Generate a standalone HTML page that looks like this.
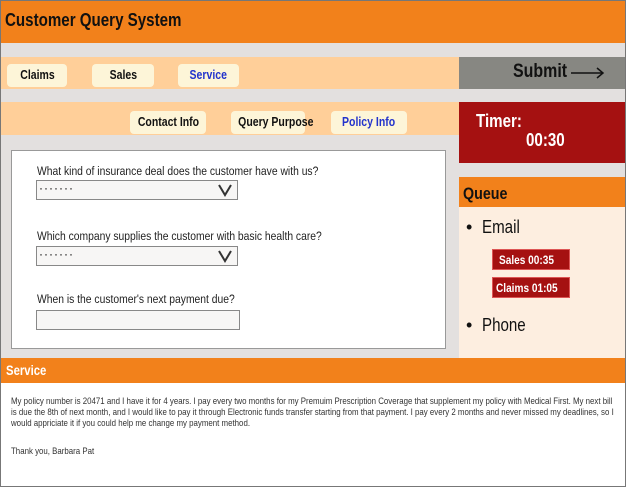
<!DOCTYPE html>
<html><head><style>
*{margin:0;padding:0;box-sizing:border-box}
body{width:626px;height:487px;position:relative;background:#e3e0df;font-family:"Liberation Sans",sans-serif;overflow:hidden}
.a{position:absolute;white-space:nowrap}
.c{display:inline-block;transform:scaleX(.84);transform-origin:left center;white-space:nowrap}
.tab{position:absolute;background:#fdf5d8;border-radius:4px;font-weight:bold;font-size:12.5px;text-align:center;line-height:23px;color:#111;white-space:nowrap}
.tab .c{transform-origin:center center}
.sel{position:absolute;left:36px;width:202px;height:20px;background:#f7f6f5;border:1px solid #888;font-size:12px;letter-spacing:1px;padding-left:2px;line-height:14px}
.lbl{position:absolute;left:37px;font-size:12.3px;color:#222;white-space:nowrap}
.badge{position:absolute;left:492px;width:78px;height:21px;background:#a51111;color:#fff;font-weight:bold;font-size:12px;line-height:21px;padding-left:6px;border:1px solid #d55;white-space:nowrap}
</style></head><body>
<div class="a" style="left:0;top:0;width:626px;height:487px;border:1px solid #777;z-index:9;pointer-events:none"></div>
<div class="a" style="left:0;top:0;width:626px;height:43px;background:#f2811b"></div>
<div class="a" style="left:5px;top:10px;font-size:18px;font-weight:bold;color:#111"><span class="c">Customer Query System</span></div>
<div class="a" style="left:0;top:57px;width:459px;height:32px;background:#ffcf99"></div>
<div class="tab" style="left:7px;top:64px;width:60px"><span class="c">Claims</span></div>
<div class="tab" style="left:92px;top:64px;width:62px"><span class="c">Sales</span></div>
<div class="tab" style="left:178px;top:64px;width:61px;color:#2233cc"><span class="c">Service</span></div>
<div class="a" style="left:459px;top:57px;width:167px;height:32px;background:#878782"></div>
<div class="a" style="left:513px;top:61px;font-size:19px;font-weight:bold;color:#111"><span class="c">Submit</span></div>
<svg class="a" style="left:570px;top:67px" width="35" height="12"><path d="M1 6H33M27 1L33 6L27 11" stroke="#111" stroke-width="1.5" fill="none"/></svg>
<div class="a" style="left:0;top:102px;width:459px;height:33px;background:#ffcf99"></div>
<div class="tab" style="left:130px;top:111px;width:76px"><span class="c">Contact Info</span></div>
<div class="tab" style="left:231px;top:111px;width:74px"><span class="c">Query Purpose</span></div>
<div class="tab" style="left:331px;top:111px;width:76px;color:#2233cc"><span class="c">Policy Info</span></div>
<div class="a" style="left:459px;top:102px;width:167px;height:61px;background:#a51111"></div>
<div class="a" style="left:476px;top:111px;font-size:18px;font-weight:bold;color:#fff"><span class="c">Timer:</span></div>
<div class="a" style="left:526px;top:130px;font-size:18px;font-weight:bold;color:#fff"><span class="c">00:30</span></div>
<div class="a" style="left:459px;top:177px;width:167px;height:30px;background:#f2811b"></div>
<div class="a" style="left:463px;top:184px;font-size:17px;font-weight:bold;color:#111"><span class="c">Queue</span></div>
<div class="a" style="left:459px;top:207px;width:167px;height:151px;background:#fdeee0"></div>
<div class="a" style="left:466px;top:217px;font-size:18px;color:#111">•&nbsp; <span class="c">Email</span></div>
<div class="badge" style="top:249px"><span class="c">Sales 00:35</span></div>
<div class="badge" style="top:277px;padding-left:3px"><span class="c">Claims 01:05</span></div>
<div class="a" style="left:466px;top:315px;font-size:18px;color:#111">•&nbsp; <span class="c">Phone</span></div>
<div class="a" style="left:11px;top:150px;width:435px;height:199px;background:#fff;border:1px solid #999"></div>
<div class="lbl" style="top:164px"><span class="c">What kind of insurance deal does the customer have with us?</span></div>
<div class="sel" style="top:180px">·······</div>
<svg class="a" style="left:217px;top:183px" width="16" height="14"><path d="M2 2L8 12L14 2" stroke="#333" stroke-width="2" fill="none"/></svg>
<div class="lbl" style="top:229px"><span class="c">Which company supplies the customer with basic health care?</span></div>
<div class="sel" style="top:246px">·······</div>
<svg class="a" style="left:217px;top:249px" width="16" height="14"><path d="M2 2L8 12L14 2" stroke="#333" stroke-width="2" fill="none"/></svg>
<div class="lbl" style="top:292px"><span class="c">When is the customer's next payment due?</span></div>
<div class="sel" style="top:310px;width:204px"></div>
<div class="a" style="left:0;top:358px;width:626px;height:25px;background:#f2811b"></div>
<div class="a" style="left:6px;top:363px;font-size:13.5px;font-weight:bold;color:#fff"><span class="c">Service</span></div>
<div class="a" style="left:0;top:383px;width:626px;height:104px;background:#fff"></div>
<div class="a" style="left:11px;top:395px;width:721px;font-size:9.4px;line-height:11px;color:#333;white-space:normal;transform:scaleX(.84);transform-origin:left top">My policy number is 20471 and I have it for 4 years. I pay every two months for my Premuim Prescription Coverage that supplement my policy with Medical First. My next bill is due the 8th of next month, and I would like to pay it through Electronic funds transfer starting from that payment. I pay every 2 months and never missed my deadlines, so I would appriciate it if you could help me change my payment method.</div>
<div class="a" style="left:11px;top:445px;font-size:9.4px;color:#333"><span class="c">Thank you, Barbara Pat</span></div>
</body></html>
